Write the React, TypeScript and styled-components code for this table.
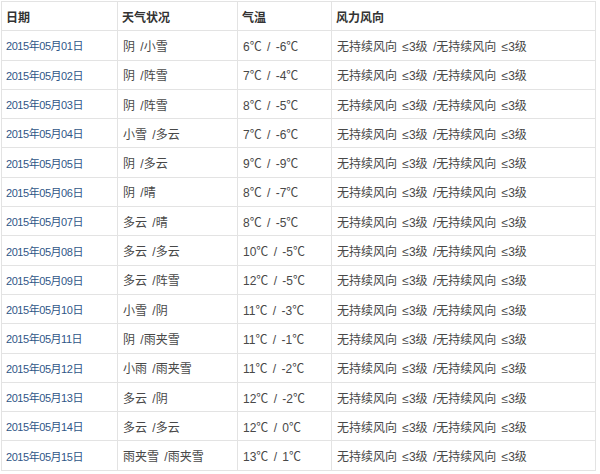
import React from "react";
import styled, { createGlobalStyle } from "styled-components";

const Global = createGlobalStyle`
  html, body { margin: 0; padding: 0; background: #fff; }
  body { font-family: "Liberation Sans", "Noto Sans CJK SC", sans-serif; }
`;

const Table = styled.table`
  border-collapse: collapse;
  margin: 1px 0 0 1px;
  width: 594px;
  table-layout: fixed;
  font-size: 12px;
  color: #484848;
`;

const Col = styled.col<{ $w: number }>`
  width: ${(p) => p.$w}px;
`;

const Row = styled.tr`
  height: 29.3px;
`;

const Head = styled.th`
  border: 1px solid #e3e3e3;
  text-align: left;
  font-weight: bold;
  color: #333;
  padding: 0 0 0 4px;
  font-size: 12px;
`;

const Cell = styled.td<{ $date?: boolean }>`
  border: 1px solid #e3e3e3;
  padding: 0 0 0 ${(p) => (p.$date ? 4 : 5)}px;
  white-space: nowrap;
  word-spacing: 2px;
  color: ${(p) => (p.$date ? "#2f5687" : "#484848")};
  font-size: ${(p) => (p.$date ? 11 : 12)}px;
  letter-spacing: ${(p) => (p.$date ? "-0.45px" : "0")};
`;

const rows: [string, string, string][] = [
  ["01", "阴 /小雪", "6℃ / -6℃"],
  ["02", "阴 /阵雪", "7℃ / -4℃"],
  ["03", "阴 /阵雪", "8℃ / -5℃"],
  ["04", "小雪 /多云", "7℃ / -6℃"],
  ["05", "阴 /多云", "9℃ / -9℃"],
  ["06", "阴 /晴", "8℃ / -7℃"],
  ["07", "多云 /晴", "8℃ / -5℃"],
  ["08", "多云 /多云", "10℃ / -5℃"],
  ["09", "多云 /阵雪", "12℃ / -5℃"],
  ["10", "小雪 /阴", "11℃ / -3℃"],
  ["11", "阴 /雨夹雪", "11℃ / -1℃"],
  ["12", "小雨 /雨夹雪", "11℃ / -2℃"],
  ["13", "多云 /阴", "12℃ / -2℃"],
  ["14", "多云 /多云", "12℃ / 0℃"],
  ["15", "雨夹雪 /雨夹雪", "13℃ / 1℃"],
];

const wind = "无持续风向 ≤3级 /无持续风向 ≤3级";

export default function App() {
  return (
    <>
      <Global />
      <Table>
        <colgroup>
          <Col $w={116} />
          <Col $w={120} />
          <Col $w={94} />
          <Col $w={264} />
        </colgroup>
        <thead>
          <Row>
            <Head>日期</Head>
            <Head>天气状况</Head>
            <Head>气温</Head>
            <Head>风力风向</Head>
          </Row>
        </thead>
        <tbody>
          {rows.map(([d, w, t]) => (
            <Row key={d}>
              <Cell $date>{`2015年05月${d}日`}</Cell>
              <Cell>{w}</Cell>
              <Cell>{t}</Cell>
              <Cell>{wind}</Cell>
            </Row>
          ))}
        </tbody>
      </Table>
    </>
  );
}
